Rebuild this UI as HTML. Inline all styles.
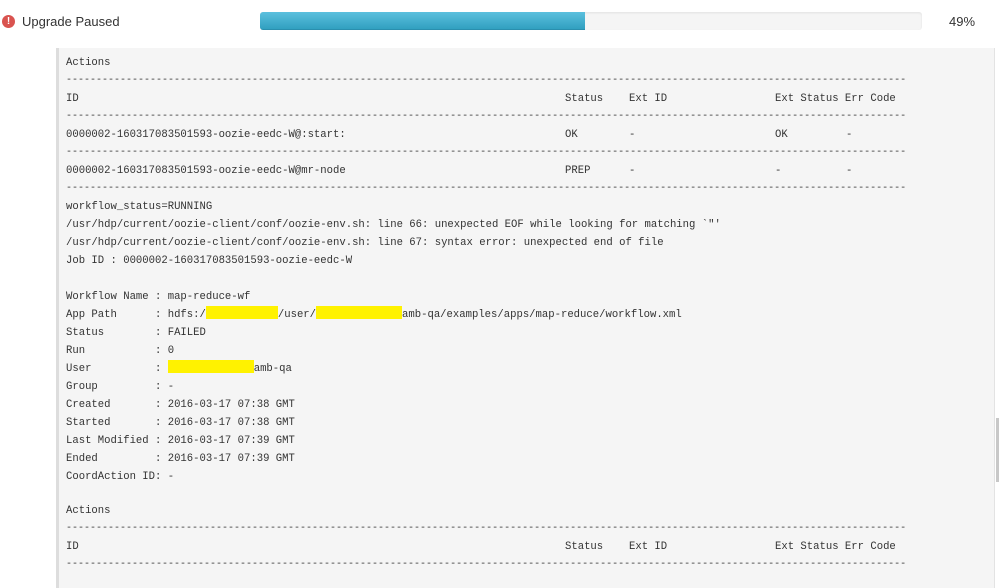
<!DOCTYPE html>
<html><head><meta charset="utf-8"><style>
body{margin:0;width:999px;height:573px;overflow:hidden;background:#fff;position:relative;font-family:"Liberation Sans",sans-serif;}
.icon{position:absolute;left:2px;top:15px;width:13px;height:13px;border-radius:50%;background:#d9534f;color:#fff;font:bold 10px/13px "Liberation Sans",sans-serif;text-align:center;}
.title{position:absolute;left:22px;top:13px;font-size:13px;color:#333;line-height:18px;}
.track{position:absolute;left:260px;top:12px;width:662px;height:18px;background:#f5f5f5;border-radius:3px;box-shadow:inset 0 1px 2px rgba(0,0,0,.08);}
.fill{position:absolute;left:0;top:0;width:325px;height:18px;border-radius:3px 0 0 3px;background:linear-gradient(#5bc0de,#31a0c0);border-bottom:1px solid #2a8fae;box-sizing:border-box;}
.pct{position:absolute;left:949px;top:13px;font-size:13px;color:#333;line-height:18px;}
.panel{position:absolute;left:56px;top:48px;width:935px;height:540px;background:#f5f5f5;border-left:3px solid #ddd;border-right:1px solid #e3e3e3;}
.sb{position:absolute;left:996px;top:418px;width:3px;height:64px;background:#c8c8c8;}
.w{position:absolute;left:0;top:2px;width:999px;height:573px;}
.l{position:absolute;left:66px;height:18px;line-height:18px;font-family:"Liberation Mono",monospace;font-size:10px;color:#333;white-space:pre;}
.p{font-size:10.6px;}
.y{display:inline-block;height:13px;vertical-align:-2px;background:#fff200;}
</style></head><body>
<div class="icon">!</div>
<div class="title">Upgrade Paused</div>
<div class="track"><div class="fill"></div></div>
<div class="pct">49%</div>
<div class="panel"></div>
<div class="sb"></div>
<div class="w">
<div class="l p" style="top:52px">Actions</div>
<div class="l" style="top:70px">--------------------------------------------------------------------------------------------------------------------------------------------</div>
<div class="l p" style="top:88px">ID</div><div class="l p" style="top:88px;left:565px">Status</div><div class="l p" style="top:88px;left:629px">Ext ID</div><div class="l p" style="top:88px;left:775px">Ext Status Err Code</div>
<div class="l" style="top:106px">--------------------------------------------------------------------------------------------------------------------------------------------</div>
<div class="l p" style="top:124px">0000002-160317083501593-oozie-eedc-W@:start:</div><div class="l p" style="top:124px;left:565px">OK</div><div class="l p" style="top:124px;left:629px">-</div><div class="l p" style="top:124px;left:775px">OK</div><div class="l p" style="top:124px;left:846px">-</div>
<div class="l" style="top:142px">--------------------------------------------------------------------------------------------------------------------------------------------</div>
<div class="l p" style="top:160px">0000002-160317083501593-oozie-eedc-W@mr-node</div><div class="l p" style="top:160px;left:565px">PREP</div><div class="l p" style="top:160px;left:629px">-</div><div class="l p" style="top:160px;left:775px">-</div><div class="l p" style="top:160px;left:846px">-</div>
<div class="l" style="top:178px">--------------------------------------------------------------------------------------------------------------------------------------------</div>
<div class="l p" style="top:196px">workflow_status=RUNNING</div>
<div class="l p" style="top:214px">/usr/hdp/current/oozie-client/conf/oozie-env.sh: line 66: unexpected EOF while looking for matching `"'</div>
<div class="l p" style="top:232px">/usr/hdp/current/oozie-client/conf/oozie-env.sh: line 67: syntax error: unexpected end of file</div>
<div class="l p" style="top:250px">Job ID : 0000002-160317083501593-oozie-eedc-W</div>
<div class="l p" style="top:286px">Workflow Name : map-reduce-wf</div>
<div class="l p" style="top:304px">App Path      : hdfs:/<span class="y" style="width:72px"></span>/user/<span class="y" style="width:86px"></span>amb-qa/examples/apps/map-reduce/workflow.xml</div>
<div class="l p" style="top:322px">Status        : FAILED</div>
<div class="l p" style="top:340px">Run           : 0</div>
<div class="l p" style="top:358px">User          : <span class="y" style="width:86px"></span>amb-qa</div>
<div class="l p" style="top:376px">Group         : -</div>
<div class="l p" style="top:394px">Created       : 2016-03-17 07:38 GMT</div>
<div class="l p" style="top:412px">Started       : 2016-03-17 07:38 GMT</div>
<div class="l p" style="top:430px">Last Modified : 2016-03-17 07:39 GMT</div>
<div class="l p" style="top:448px">Ended         : 2016-03-17 07:39 GMT</div>
<div class="l p" style="top:466px">CoordAction ID: -</div>
<div class="l p" style="top:500px">Actions</div>
<div class="l" style="top:518px">--------------------------------------------------------------------------------------------------------------------------------------------</div>
<div class="l p" style="top:536px">ID</div><div class="l p" style="top:536px;left:565px">Status</div><div class="l p" style="top:536px;left:629px">Ext ID</div><div class="l p" style="top:536px;left:775px">Ext Status Err Code</div>
<div class="l" style="top:554px">--------------------------------------------------------------------------------------------------------------------------------------------</div>
</div>
</body></html>
